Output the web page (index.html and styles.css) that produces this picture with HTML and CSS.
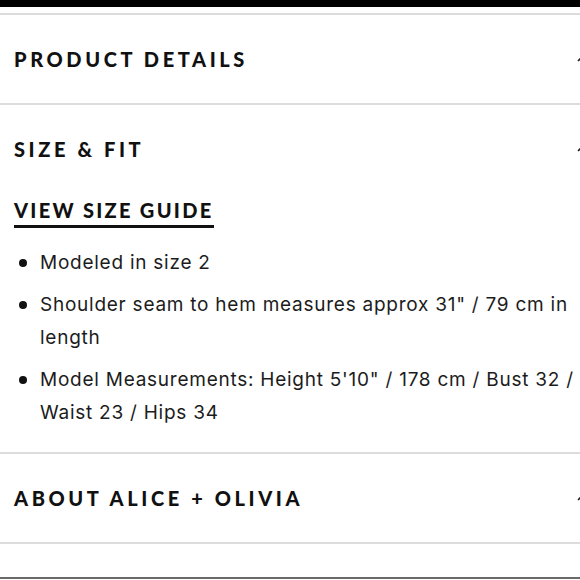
FILE: index.html
```html
<!DOCTYPE html>
<html>
<head>
<meta charset="utf-8">
<link rel="stylesheet" href="styles.css">
</head>
<body>
<div class="page">
  <div class="topbar"></div>
  <div class="gap"></div>
  <section class="acc">
    <div class="acc-head">
      <h2 class="acc-title">PRODUCT DETAILS</h2>
      <svg class="chev" width="10" height="8" viewBox="0 0 10 8"><path d="M1 6 L5 2 L9 6" fill="none" stroke="#222" stroke-width="1.6"/></svg>
    </div>
  </section>
  <section class="acc">
    <div class="acc-head">
      <h2 class="acc-title">SIZE &amp; FIT</h2>
      <svg class="chev" width="10" height="8" viewBox="0 0 10 8"><path d="M1 6 L5 2 L9 6" fill="none" stroke="#222" stroke-width="1.6"/></svg>
    </div>
    <div class="acc-body">
      <a class="guide">VIEW SIZE GUIDE</a>
      <ul class="list">
        <li>Modeled in size 2</li>
        <li>Shoulder seam to hem measures approx 31" / 79 cm in length</li>
        <li>Model Measurements: Height 5'10" / 178 cm / Bust 32 / Waist 23 / Hips 34</li>
      </ul>
    </div>
  </section>
  <section class="acc">
    <div class="acc-head">
      <h2 class="acc-title">ABOUT ALICE + OLIVIA</h2>
      <svg class="chev" width="10" height="8" viewBox="0 0 10 8"><path d="M1 6 L5 2 L9 6" fill="none" stroke="#222" stroke-width="1.6"/></svg>
    </div>
  </section>
  <section class="acc last"></section>
  <div class="bottomline"></div>
</div>
</body>
</html>
```
FILE: styles.css
```css
html, body {
  margin: 0;
  padding: 0;
  background: #fff;
}
.page {
  width: 580px;
  height: 580px;
  overflow: hidden;
  display: flex;
  flex-direction: column;
  font-family: "Lato", "Liberation Sans", sans-serif;
  color: #111;
}
.topbar {
  height: 7px;
  background: #000;
  flex: none;
}
.gap {
  height: 6px;
  flex: none;
}
.acc {
  border-top: 2px solid #dcdcdc;
  flex: none;
}
.acc-head {
  height: 88px;
  display: flex;
  align-items: center;
  justify-content: space-between;
  padding-left: 14px;
  width: 580px;
  box-sizing: border-box;
}
.acc-title {
  margin: 0;
  font-size: 20px;
  font-weight: 900;
  letter-spacing: 3.6px;
  color: #111;
}
.chev {
  margin-right: -7px;
  flex: none;
}
.acc-body {
  padding: 0 0 14px 14px;
}
.guide {
  display: inline-block;
  font-size: 20px;
  font-weight: 900;
  letter-spacing: 2.3px;
  color: #111;
  padding-bottom: 3px;
  border-bottom: 3px solid #111;
  margin-top: 5px;
}
.list {
  margin: 18px 0 0 0;
  padding: 0 4px 0 26px;
  list-style: none;
}
.list li {
  position: relative;
  font-family: "Inter", "Open Sans", sans-serif;
  font-size: 19px;
  letter-spacing: 0.75px;
  line-height: 33px;
  margin-bottom: 9px;
  color: #1c1c1c;
}
.list li::before {
  content: "";
  position: absolute;
  left: -21px;
  top: 13px;
  width: 8px;
  height: 8px;
  border-radius: 50%;
  background: #111;
}
.last {
  height: 33px;
}
.bottomline {
  height: 2px;
  background: #6a6a6a;
  flex: none;
}
```
